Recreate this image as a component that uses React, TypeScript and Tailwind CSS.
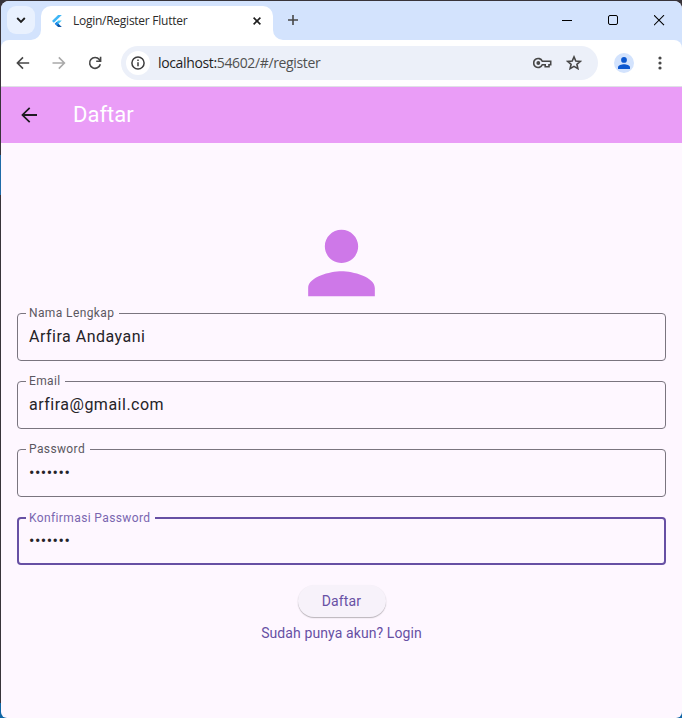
import React from "react";

const chromeFont = "font-['Open_Sans','Noto_Sans',sans-serif]";

function Foot({ flip = false }: { flip?: boolean }) {
  return (
    <svg width="10" height="10" viewBox="0 0 10 10" className={flip ? "-scale-x-100" : ""}>
      <path d="M10 0V10H0A10 10 0 0 0 10 0Z" fill="#fff" />
    </svg>
  );
}

function TabStrip() {
  return (
    <div className="flex h-[39px] items-end bg-[#d3e3fd]">
      <div className="mb-[6px] ml-[6px] flex h-7 w-7 items-center justify-center rounded-[9px] bg-[#e9f1fe]">
        <svg width="10" height="8" viewBox="0 0 10 8" fill="none" stroke="#1f1f1f" strokeWidth="1.9">
          <path d="M1.2 2L5 5.8L8.8 2" />
        </svg>
      </div>
      <div className="-ml-[4px] flex items-end">
        <Foot />
        <div className="flex h-[34px] w-[232px] items-center rounded-t-[10px] bg-white pr-[11px] pb-[4px] pl-[11px]">
          <svg width="10" height="12" viewBox="0 0 10 12">
            <path d="M6.1 0H9.8L1.9 7.7L0 5.9Z" fill="#3fb6f6" />
            <path d="M6.1 5.6H9.8L6.5 8.8L4.6 7Z" fill="#42c5f8" />
            <path d="M2.8 8.8L4.7 7L9.8 12H6.1Z" fill="#0d57a8" />
            <path d="M2.8 8.8L4.7 7L6.5 8.8L4.7 10.6Z" fill="#1b8ff0" />
          </svg>
          <span className={`ml-[11px] flex-1 text-[12px] leading-[16px] tracking-[-0.26px] whitespace-nowrap text-[#2b2b2b] ${chromeFont}`}>
            Login/Register Flutter
          </span>
          <svg width="8" height="8" viewBox="0 0 8 8" stroke="#1f1f1f" strokeWidth="1.6" className="mr-[1px] mb-[1px]">
            <path d="M.6 .6L7.4 7.4M7.4 .6L.6 7.4" />
          </svg>
        </div>
        <Foot flip />
      </div>
      <svg width="10" height="10" viewBox="0 0 10 10" stroke="#474747" strokeWidth="1.6" className="mb-[15px] ml-[5px]">
        <path d="M5 0V10M0 5H10" />
      </svg>
      <div className="mr-[17px] mb-[14px] ml-auto flex gap-[35px] text-black">
        <svg width="11" height="11" viewBox="0 0 11 11" stroke="currentColor">
          <path d="M0 5.5H10" />
        </svg>
        <svg width="11" height="11" viewBox="0 0 11 11" fill="none" stroke="currentColor">
          <rect x=".5" y=".5" width="9" height="9" rx="1.5" />
        </svg>
        <svg width="11" height="11" viewBox="0 0 11 11" stroke="currentColor" strokeWidth="1.1">
          <path d="M0 .2L10 10.2M10 .2L0 10.2" />
        </svg>
      </div>
    </div>
  );
}

function Toolbar() {
  return (
    <div className="bg-[#d3e3fd]">
      <div className="flex h-[47px] items-center rounded-t-[8px] border-b border-[#dfe1e6] bg-white">
        <svg width="14" height="14" viewBox="0 0 14 14" fill="none" stroke="#474747" strokeWidth="1.6" className="ml-[15px]">
          <path d="M13.2 7H2M7 1.4L1.4 7L7 12.6" />
        </svg>
        <svg width="14" height="14" viewBox="0 0 14 14" fill="none" stroke="#a9a9a9" strokeWidth="1.6" className="ml-[22px]">
          <path d="M.5 7H12M6.8 1.4L12.4 7L6.8 12.6" />
        </svg>
        <svg width="14" height="14" viewBox="0 0 14 14" fill="none" stroke="#474747" strokeWidth="1.6" className="ml-[22px]">
          <path d="M12.3 8.2A5.4 5.4 0 1 1 11.3 3.6L12.6 5.1M12.6 .8V5.2H8.2" />
        </svg>
        <div className="ml-[19px] flex h-[34px] w-[477px] items-center rounded-full bg-[#ecf0f9] pl-[5px]">
          <div className="flex h-6 w-6 items-center justify-center rounded-full bg-white">
            <svg width="14" height="14" viewBox="0 0 14 14" fill="none" stroke="#3c3c3c" strokeWidth="1.5">
              <circle cx="7" cy="7" r="6.1" />
              <path d="M7 6.2V10.3M7 3.6V5.1" />
            </svg>
          </div>
          <span className={`ml-[8px] flex-1 text-[14px] leading-5 tracking-[-0.36px] whitespace-nowrap text-[#505050] ${chromeFont}`}>
            <span className="text-[#1f1f1f]">localhost:</span>54602/#/register
          </span>
          <svg width="19" height="12" viewBox="0 0 19 12" fill="none" stroke="#474747" strokeWidth="1.6">
            <path d="M9.3 4.2A4.5 4.5 0 1 0 9.3 7.8H12.2V9.8H16V7.8H17.7V4.2Z" />
            <circle cx="5.3" cy="6" r="1.9" fill="#474747" stroke="none" />
          </svg>
          <svg width="16" height="16" viewBox="0 0 16 16" fill="none" stroke="#474747" strokeWidth="1.6" className="mr-[16px] ml-[14px]">
            <path d="M8 1.9L9.8 6L14.3 6.4L10.9 9.3L11.9 13.7L8 11.4L4.1 13.7L5.1 9.3L1.7 6.4L6.2 6Z" />
          </svg>
        </div>
        <div className="ml-[16px] flex h-5 w-5 items-center justify-center rounded-full bg-[#d3e3fd]">
          <svg width="12" height="12" viewBox="0 0 12 12" fill="#0b57d0">
            <circle cx="6" cy="2.9" r="2.9" />
            <path d="M0 12V10.2C0 8.2 3.6 7.2 6 7.2S12 8.2 12 10.2V12Z" />
          </svg>
        </div>
        <svg width="4" height="14" viewBox="0 0 4 14" fill="#474747" className="ml-[24px]">
          <circle cx="2" cy="2" r="1.6" />
          <circle cx="2" cy="7" r="1.6" />
          <circle cx="2" cy="12" r="1.6" />
        </svg>
      </div>
    </div>
  );
}

function Field({ label, value, focused = false }: { label: string; value: string; focused?: boolean }) {
  return (
    <fieldset
      className={`h-[54px] w-full rounded-[4px] ${
        focused ? "border-2 border-[#6750a4] pl-[7px]" : "border border-[#7a757f] pl-[8px]"
      }`}
    >
      <legend
        className={`h-[13px] pr-[4.5px] pl-[3px] text-[12px] tracking-[0.385px] whitespace-nowrap ${
          focused ? "leading-[15px] text-[#7a66b0]" : "leading-[13px] text-[#5b5761]"
        }`}
      >
        {label}
      </legend>
      <div className="pt-[5px] pl-[3px] text-[16px] leading-6 tracking-[0.5px] text-[#252328]">{value}</div>
    </fieldset>
  );
}

export default function App() {
  return (
    <div className="h-[718px] w-[682px] overflow-hidden bg-[linear-gradient(to_bottom,#38343a_155px,#1f6ba8_155px,#1f6ba8_195px,#38343a_195px,#38343a_703px,#0f65a5_703px)] pt-px pl-px font-[Roboto,sans-serif]">
      <div className="flex h-full flex-col overflow-hidden rounded-t-[8px] rounded-b-[6px] bg-[#fef7ff]">
        <TabStrip />
        <Toolbar />
        <header className="flex h-14 items-center bg-[#ea9df7] pl-[16px]">
          <svg width="24" height="24" viewBox="0 0 24 24" fill="#1d1b20">
            <path d="M20 11.1H7.6l5.7-5.7L12.1 4.2 4.2 12l7.9 7.8 1.2-1.2-5.7-5.7H20z" />
          </svg>
          <h1 className="ml-[32px] text-[22px] leading-7 text-white">Daftar</h1>
        </header>
        <main className="flex flex-1 flex-col items-center pt-[70px] pr-[16px] pl-[16px]">
          <svg width="100" height="100" viewBox="0.12 0 24 24" fill="#ce78e8" className="shrink-0">
            <path d="M12 12c2.21 0 4-1.79 4-4s-1.79-4-4-4-4 1.79-4 4 1.79 4 4 4zm0 2c-2.67 0-8 1.34-8 4v2h16v-2c0-2.66-5.33-4-8-4z" />
          </svg>
          <form className="-mt-[6px] flex w-full flex-col gap-[14px]">
            <Field label="Nama Lengkap" value="Arfira Andayani" />
            <Field label="Email" value="arfira@gmail.com" />
            <Field label="Password" value="•••••••" />
            <Field label="Konfirmasi Password" value="•••••••" focused />
          </form>
          <button className="mt-[20px] h-8 w-[88px] rounded-full bg-[#f7f2fa] text-[14px] tracking-[0.15px] text-[#6750a4] shadow-[0_1px_1px_rgba(0,0,0,0.22),0_1px_2px_rgba(0,0,0,0.08)]">
            Daftar
          </button>
          <a className="mt-[6px] text-[14px] leading-5 tracking-[0.1px] text-[#6750a4]">Sudah punya akun? Login</a>
        </main>
      </div>
    </div>
  );
}
